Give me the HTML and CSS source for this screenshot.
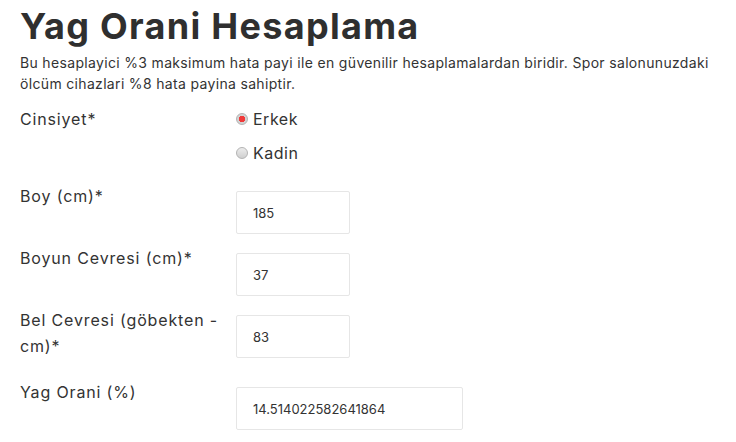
FILE: index.html
```html
<!DOCTYPE html>
<html lang="tr">
<head>
<meta charset="utf-8">
<link rel="stylesheet" href="styles.css">
</head>
<body>
<div class="page">
  <h1 class="title">Yag Orani Hesaplama</h1>
  <p class="intro">Bu hesaplayici %3 maksimum hata payi ile en güvenilir hesaplamalardan biridir. Spor salonunuzdaki ölcüm cihazlari %8 hata payina sahiptir.</p>
  <form class="calc">
    <div class="row">
      <label class="label">Cinsiyet*</label>
      <div class="field radios">
        <label class="radio"><input type="radio" name="g" checked><span>Erkek</span></label>
        <label class="radio"><input type="radio" name="g"><span>Kadin</span></label>
      </div>
    </div>
    <div class="row">
      <label class="label">Boy (cm)*</label>
      <div class="field"><input class="box" type="text" value="185"></div>
    </div>
    <div class="row">
      <label class="label">Boyun Cevresi (cm)*</label>
      <div class="field"><input class="box" type="text" value="37"></div>
    </div>
    <div class="row">
      <label class="label">Bel Cevresi (göbekten - cm)*</label>
      <div class="field"><input class="box" type="text" value="83"></div>
    </div>
    <div class="row">
      <label class="label">Yag Orani (%)</label>
      <div class="field"><input class="box wide" type="text" value="14.514022582641864"></div>
    </div>
  </form>
</div>
</body>
</html>
```

FILE: styles.css
```css
* { box-sizing: border-box; }
html, body { margin: 0; background: #fff; }
body {
  font-family: "Inter", "Open Sans", sans-serif;
  color: #333;
}
.page { padding: 4px 20px 0 20px; }
.title {
  margin: 0;
  font-family: "Inter", sans-serif;
  font-weight: 700;
  font-size: 36px;
  line-height: 44px;
  letter-spacing: 1.3px;
  color: #2f2f2f;
}
.intro {
  margin: 4px 0 12px 0;
  font-size: 14px;
  line-height: 21px;
  letter-spacing: 0.33px;
  color: #333;
}
.calc { display: flex; flex-direction: column; gap: 11px; }
.row {
  display: grid;
  grid-template-columns: 216px auto;
  align-items: start;
}
.label {
  font-size: 16px;
  line-height: 26px;
  letter-spacing: 0.85px;
  padding-bottom: 9px;
  padding-right: 4px;
}
.radios { display: flex; flex-direction: column; gap: 8px; padding-bottom: 6px; }
.radio {
  display: flex;
  align-items: center;
  gap: 5px;
  font-size: 16px;
  line-height: 26px;
  letter-spacing: 0.5px;
}
.radio input {
  appearance: none;
  -webkit-appearance: none;
  margin: 0;
  width: 12px;
  height: 12px;
  border-radius: 50%;
  border: 1px solid #b3b3b3;
  background: linear-gradient(#ececec, #cfcfcf);
}
.radio input:checked {
  background: radial-gradient(circle, #f03a3a 0 3px, #d3d3d3 3.5px);
}
.box {
  display: block;
  margin-top: 8px;
  width: 114px;
  height: 43px;
  padding: 0 0 0 16px;
  border: 1px solid #e6e6e6;
  border-radius: 2px;
  background: #fff;
  font-family: "Inter", sans-serif;
  font-size: 13px;
  color: #333;
  outline: none;
}
.box.wide { width: 227px; }
```
